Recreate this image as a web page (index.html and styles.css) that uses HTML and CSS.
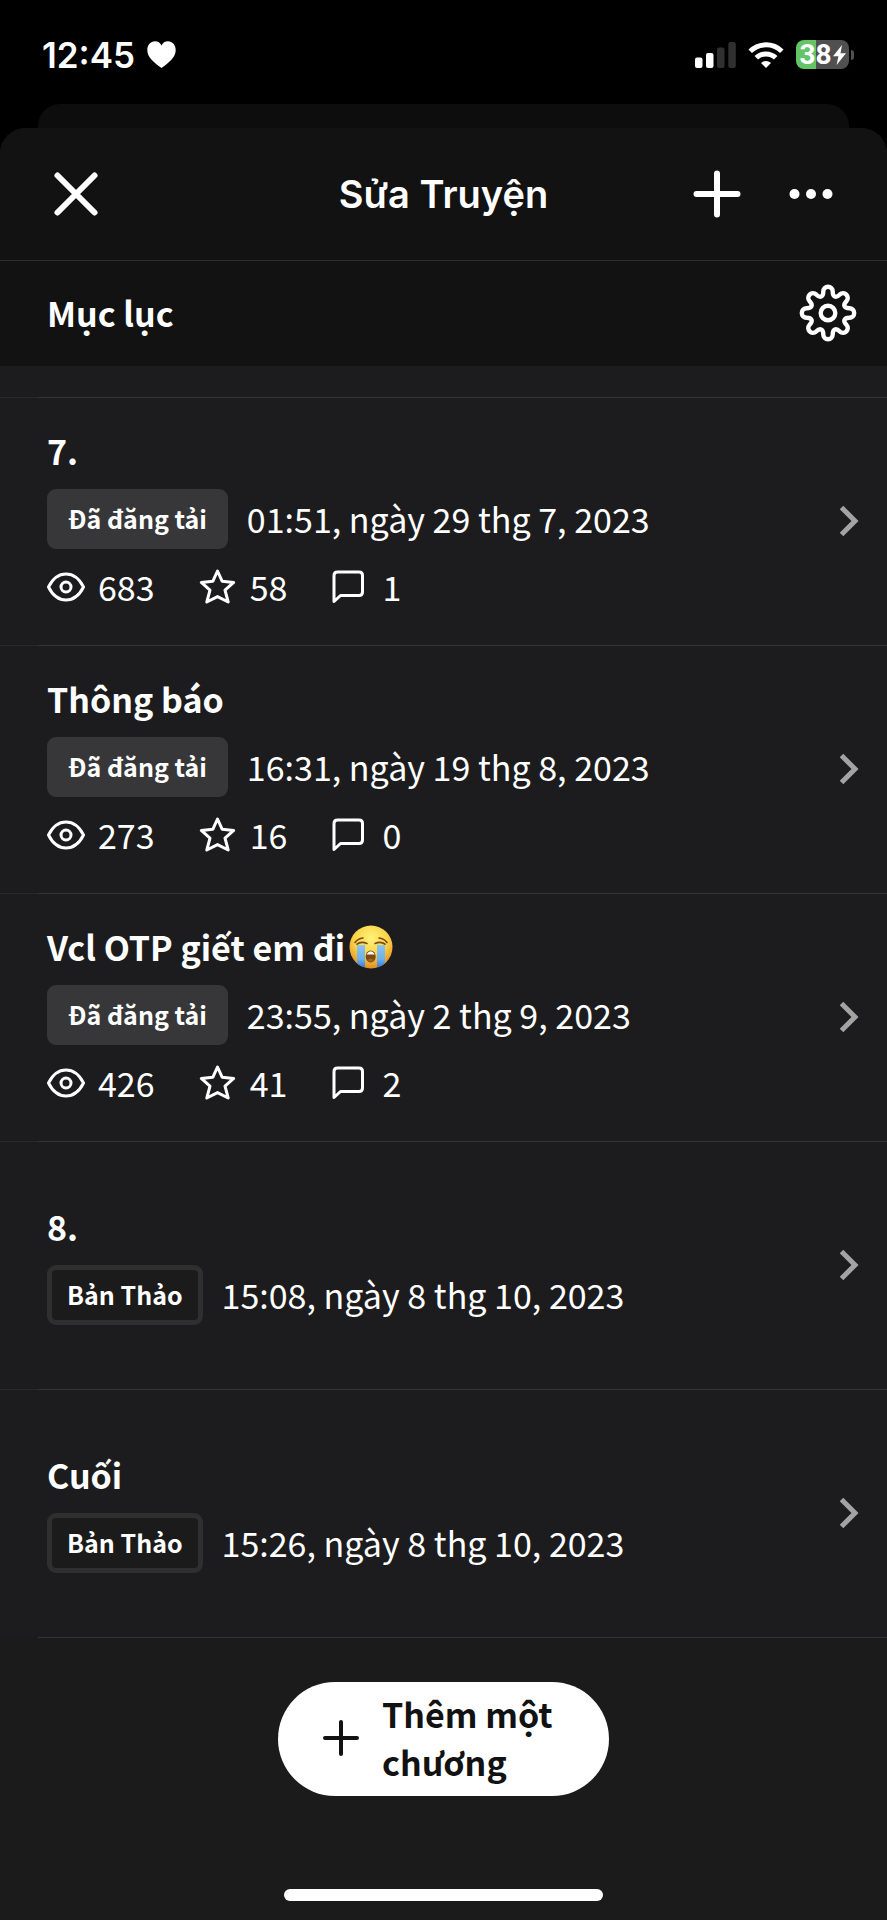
FILE: index.html
```html
<!DOCTYPE html>
<html lang="vi">
<head>
<meta charset="utf-8">
<meta name="viewport" content="width=device-width, initial-scale=1">
<title>Sửa Truyện</title>
<link rel="stylesheet" href="styles.css">
</head>
<body>
<svg class="sprite" aria-hidden="true">
  <symbol id="eye" viewBox="0 0 38 38"><path d="M1.500 19C5 12 11 6 19 6s14 6 17.500 13C33 26 27 32 19 32S5 26 1.500 19z"/><circle cx="19" cy="19" r="5"/></symbol>
  <symbol id="star" viewBox="0 0 38 38"><path d="M18.500 3l4.600 10.200 11.600 1.200-8.700 7.800 3.200 11.800-10.700-5.400L7.800 34 11 22.200 2.300 14.400l11.600-1.200z"/></symbol>
  <symbol id="comment" viewBox="0 0 38 38"><path d="M3 33.500V7.500Q3 4 6.500 4H28q3.500 0 3.500 3.500V24q0 3.500-3.500 3.500H9.500z"/></symbol>
  <symbol id="chevron" viewBox="0 0 20 32"><path d="M2.500 2.500L16 16 2.500 29.500"/></symbol>
</svg>
<div class="screen">
  <div class="status">
    <div class="status-group status-left">
      <span class="time">12:45</span>
      <svg class="heart" viewBox="0 0 29 27" aria-hidden="true"><path d="M14.500 27C7 21.500.3 16.500.3 9 .3 4 3.600.3 8 .3c3 0 5.300 1.500 6.500 4.200C15.700 1.800 18 .3 21 .3c4.400 0 7.700 3.700 7.700 8.700 0 7.500-6.700 12.500-14.200 18z"/></svg>
    </div>
    <div class="status-group">
      <svg class="signal" viewBox="0 0 41 26" aria-hidden="true"><rect x="0" y="15.500" width="7.500" height="10.500" rx="2"/><rect x="11" y="11" width="7.500" height="15" rx="2"/><rect class="off" x="22" y="5.500" width="7.500" height="20.500" rx="2"/><rect class="off" x="33.300" y="0" width="7.500" height="26" rx="2"/></svg>
      <svg class="wifi" viewBox="0 0 36 26" aria-hidden="true"><path d="M18 26l-5-5a7.200 7.200 0 0 1 10 0z"/><path class="arc" d="M8.300 15.800a14 14 0 0 1 19.400 0M2.200 9.300a22.600 22.600 0 0 1 31.600 0"/></svg>
      <div class="battery-wrap">
        <div class="battery"><span>38</span><svg class="bolt" viewBox="0 0 13 20" aria-hidden="true"><path d="M9 0L0 11.300h5.400L3.600 20 13 8.300H7.500z"/></svg></div>
        <span class="nub"></span>
      </div>
    </div>
  </div>
  <div class="sheet-behind"></div>
  <main class="sheet">
    <header class="topbar">
      <button class="icon-button" aria-label="Đóng"><svg viewBox="0 0 56 56"><path class="thick" d="M9.500 9.500l37 37M46.500 9.500l-37 37"/></svg></button>
      <h1>Sửa Truyện</h1>
      <div class="actions">
        <button class="icon-button" aria-label="Thêm"><svg viewBox="0 0 56 56"><path class="thick" d="M28 7.500v41M7.500 28h41"/></svg></button>
        <button class="icon-button" aria-label="Tùy chọn"><svg class="dots" viewBox="0 0 56 56"><circle cx="11.500" cy="28" r="5"/><circle cx="28" cy="28" r="5"/><circle cx="44.500" cy="28" r="5"/></svg></button>
      </div>
    </header>
    <div class="section-bar">
      <h2>Mục lục</h2>
      <button class="icon-button" aria-label="Cài đặt"><svg class="gear" viewBox="-29 -29 58 58"><path d="M-4.700-21.500A4.700 4.700 0 0 1 4.700-21.500C4.700-16 7.990-14.630 11.880-18.520A4.700 4.700 0 0 1 18.520-11.880C14.630-7.990 16-4.700 21.500-4.700A4.700 4.700 0 0 1 21.500 4.700C16 4.700 14.630 7.990 18.520 11.880A4.700 4.700 0 0 1 11.880 18.520C7.990 14.630 4.700 16 4.700 21.500A4.700 4.700 0 0 1-4.700 21.500C-4.700 16-7.990 14.630-11.880 18.520A4.700 4.700 0 0 1-18.520 11.880C-14.630 7.990-16 4.700-21.500 4.700A4.700 4.700 0 0 1-21.500-4.700C-16-4.700-14.630-7.990-18.520-11.880A4.700 4.700 0 0 1-11.880-18.520C-7.990-14.630-4.700-16-4.700-21.500z"/><circle r="7.300"/></svg></button>
    </div>
    <ul class="chapters">
      <li><a class="chapter" href="#c1">
        <div class="info">
          <h3>7.</h3>
          <div class="meta"><span class="badge">Đã đăng tải</span><span>01:51, ngày 29 thg 7, 2023</span></div>
          <div class="stats"><span class="stat"><svg><use href="#eye"/></svg>683</span><span class="stat"><svg><use href="#star"/></svg>58</span><span class="stat"><svg><use href="#comment"/></svg>1</span></div>
        </div>
        <svg class="chevron"><use href="#chevron"/></svg>
      </a></li>
      <li><a class="chapter" href="#c2">
        <div class="info">
          <h3>Thông báo</h3>
          <div class="meta"><span class="badge">Đã đăng tải</span><span>16:31, ngày 19 thg 8, 2023</span></div>
          <div class="stats"><span class="stat"><svg><use href="#eye"/></svg>273</span><span class="stat"><svg><use href="#star"/></svg>16</span><span class="stat"><svg><use href="#comment"/></svg>0</span></div>
        </div>
        <svg class="chevron"><use href="#chevron"/></svg>
      </a></li>
      <li><a class="chapter" href="#c3">
        <div class="info">
          <h3>Vcl OTP giết em đi<svg class="emoji" viewBox="0 0 44 44" role="img" aria-label="😭">
            <defs>
              <radialGradient id="face" cx=".5" cy=".3" r=".72"><stop offset="0" stop-color="#fff27a"/><stop offset=".55" stop-color="#fbd247"/><stop offset="1" stop-color="#e08a1e"/></radialGradient>
              <linearGradient id="tear" x2="0" y2="1"><stop offset="0" stop-color="#8cc4ee"/><stop offset=".6" stop-color="#6eb0ea"/><stop offset="1" stop-color="#2f6fd2"/></linearGradient>
              <clipPath id="round"><circle cx="22" cy="22" r="21.500"/></clipPath>
            </defs>
            <circle cx="22" cy="22" r="21.500" fill="url(#face)"/>
            <g clip-path="url(#round)" fill="url(#tear)"><path d="M8 19.500q4 1.500 8 0v24.500H8zM28 19.500q4 1.500 8 0v24.500h-8z"/></g>
            <g fill="none" stroke="#7a4a10" stroke-width="1.600" stroke-linecap="round"><path d="M8 19.200q4-3.200 10-.7M36 19.200q-4-3.200-10-.7M6 17.500q3-4 8-4.500M38 17.500q-3-4-8-4.500"/></g>
            <ellipse cx="21.700" cy="31.500" rx="5" ry="6" fill="#7b4a13"/>
            <path d="M17.500 29.500q4.200-6.500 8.400 0z" fill="#fff"/><path d="M18.500 35q3.200-3 6.400 0-3.200 3.500-6.400 0z" fill="#a8651f"/>
          </svg></h3>
          <div class="meta"><span class="badge">Đã đăng tải</span><span>23:55, ngày 2 thg 9, 2023</span></div>
          <div class="stats"><span class="stat"><svg><use href="#eye"/></svg>426</span><span class="stat"><svg><use href="#star"/></svg>41</span><span class="stat"><svg><use href="#comment"/></svg>2</span></div>
        </div>
        <svg class="chevron"><use href="#chevron"/></svg>
      </a></li>
      <li><a class="chapter" href="#c4">
        <div class="info">
          <h3>8.</h3>
          <div class="meta"><span class="badge draft">Bản Thảo</span><span>15:08, ngày 8 thg 10, 2023</span></div>
        </div>
        <svg class="chevron"><use href="#chevron"/></svg>
      </a></li>
      <li><a class="chapter" href="#c5">
        <div class="info">
          <h3>Cuối</h3>
          <div class="meta"><span class="badge draft">Bản Thảo</span><span>15:26, ngày 8 thg 10, 2023</span></div>
        </div>
        <svg class="chevron"><use href="#chevron"/></svg>
      </a></li>
    </ul>
    <footer class="footer">
      <button class="add"><svg viewBox="0 0 36 36" aria-hidden="true"><path d="M18 2v32M2 18h32"/></svg><span>Thêm một chương</span></button>
      <div class="home-indicator"></div>
    </footer>
  </main>
</div>
</body>
</html>
```
FILE: styles.css
```css
* { box-sizing: border-box; }
body { margin: 0; background: #000; color: #fff; font-family: "Noto Sans CJK SC", "Noto Sans", sans-serif; font-size: 34px; line-height: 44px; }
h1, h2, h3, ul { margin: 0; padding: 0; font-size: inherit; }
h2, h3 { font-weight: 700; }
svg { display: block; flex: none; fill: none; stroke: currentColor; }
button { border: 0; padding: 0; background: none; color: inherit; font: inherit; }
.sprite { position: absolute; width: 0; height: 0; }
.screen { display: flex; flex-direction: column; min-height: 100vh; }

.status { display: flex; justify-content: space-between; align-items: center; height: 104px; padding: 5px 33px 0 42px; font-family: Inter, sans-serif; }
.status svg { fill: #fff; stroke: none; }
.status-group { display: flex; align-items: center; gap: 12px; }
.time { font-size: 35px; font-weight: 600; }
.heart { width: 29px; height: 27px; }
.signal { width: 41px; height: 26px; }
.signal .off { fill: #303030; }
.wifi { width: 36px; height: 26px; }
.status .arc { fill: none; stroke: #fff; stroke-width: 5; }
.battery-wrap { display: flex; align-items: center; gap: 2px; }
.battery { display: flex; align-items: center; justify-content: center; gap: 1px; width: 53px; height: 29px; border-radius: 8px; background: linear-gradient(90deg, #65c466 38%, #505050 38%); font-family: Roboto, sans-serif; font-size: 28px; font-weight: 700; line-height: 29px; }
.bolt { width: 13px; height: 20px; }
.nub { width: 3px; height: 10px; border-radius: 0 3px 3px 0; background: #505050; }

.sheet-behind { height: 24px; margin: 0 38px; border-radius: 22px 22px 0 0; background: #0d0d0d; }
.sheet { display: flex; flex-direction: column; flex: 1; border-radius: 26px 26px 0 0; background: #1b1b1b; overflow: hidden; }
.topbar { display: grid; grid-template-columns: 1fr auto 1fr; align-items: center; height: 133px; padding: 0 48px; border-bottom: 1px solid #2e2e2e; background: #121212; }
.topbar h1 { font-family: Inter, sans-serif; font-size: 38px; font-weight: 600; }
.actions { display: flex; justify-content: flex-end; gap: 38px; }
.icon-button { display: block; justify-self: start; }
.icon-button svg { width: 56px; height: 56px; }
.icon-button .gear { width: 58px; height: 58px; stroke-width: 4.400; }
.thick { stroke-width: 6; stroke-linecap: round; }
.dots { fill: currentColor; stroke: none; }
.section-bar { display: flex; justify-content: space-between; align-items: center; height: 105px; padding: 0 30px 2px 47px; background: #121212; }

.chapters { padding-top: 31px; list-style: none; background: #1c1c1e; }
.chapter { display: flex; justify-content: space-between; align-items: center; gap: 20px; min-height: 248px; padding: 0 28px 0 47px; color: inherit; text-decoration: none; background: linear-gradient(#353537, #353537) 38px 0 / 100% 1px no-repeat, linear-gradient(#29292b, #29292b) 0 0 / 100% 1px no-repeat; }
.info { display: grid; gap: 16px; }
.info h3, .meta, .stats, .stat { display: flex; align-items: center; }
.emoji { width: 44px; height: 44px; margin-left: 4px; stroke: none; }
.meta { gap: 19px; }
.badge { height: 60px; padding: 0 21px; border-radius: 9px; background: #373739; font-size: 25px; font-weight: 700; line-height: 58px; }
.badge.draft { padding: 0 15px; border: 5px solid #2f2f2f; background: #1b1b1b; line-height: 48px; }
.stats { gap: 44px; padding-bottom: 4px; }
.stat { gap: 13px; }
.stat svg { width: 38px; height: 38px; stroke-width: 3; stroke-linejoin: round; }
.chevron { width: 20px; height: 32px; color: #a3a3a3; stroke-width: 5; }

.footer { display: flex; flex-direction: column; align-items: center; flex: 1; padding: 45px 0 19px; background: linear-gradient(#353537, #353537) 38px 0 / 100% 1px no-repeat; }
.add { display: flex; align-items: center; gap: 23px; max-width: 331px; padding: 8px 45px 10px; border-radius: 57px; background: #fff; color: #121212; font-weight: 700; line-height: 48px; text-align: left; }
.add svg { width: 36px; height: 36px; stroke-width: 4; stroke-linecap: round; }
.home-indicator { width: 36%; height: 12px; margin-top: auto; border-radius: 6px; background: #fff; }
```
